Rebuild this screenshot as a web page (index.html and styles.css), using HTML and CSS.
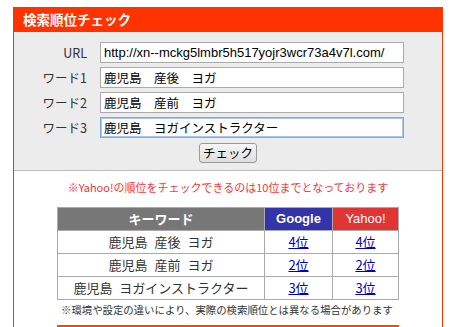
FILE: index.html
```html
<!DOCTYPE html>
<html lang="ja">
<head>
<meta charset="utf-8">
<link rel="stylesheet" href="styles.css">
</head>
<body>
<div class="page">
  <div class="box">
    <div class="box-head">検索順位チェック</div>
    <div class="form">
      <div class="form-grid">
        <label class="lbl">URL</label>
        <div class="inp url">http://xn--mckg5lmbr5h517yojr3wcr73a4v7l.com/</div>
        <label class="lbl">ワード1</label>
        <div class="inp">鹿児島　産後　ヨガ</div>
        <label class="lbl">ワード2</label>
        <div class="inp">鹿児島　産前　ヨガ</div>
        <label class="lbl">ワード3</label>
        <div class="inp focus">鹿児島　ヨガインストラクター</div>
      </div>
      <div class="btn-row"><button class="btn">チェック</button></div>
    </div>
    <div class="result">
      <p class="notice">※Yahoo!の順位をチェックできるのは10位までとなっております</p>
      <table class="rank">
        <tr>
          <th class="th-kw">キーワード</th>
          <th class="th-g">Google</th>
          <th class="th-y">Yahoo!</th>
        </tr>
        <tr>
          <td class="kw">鹿児島 産後 ヨガ</td>
          <td><a href="#">4位</a></td>
          <td><a href="#">4位</a></td>
        </tr>
        <tr>
          <td class="kw">鹿児島 産前 ヨガ</td>
          <td><a href="#">2位</a></td>
          <td><a href="#">2位</a></td>
        </tr>
        <tr>
          <td class="kw">鹿児島 ヨガインストラクター</td>
          <td><a href="#">3位</a></td>
          <td><a href="#">3位</a></td>
        </tr>
      </table>
      <p class="foot">※環境や設定の違いにより、実際の検索順位とは異なる場合があります</p>
      <div class="bar"></div>
    </div>
  </div>
</div>
</body>
</html>
```

FILE: styles.css
```css
html, body {
  margin: 0;
  padding: 0;
  background: #fff;
}
body {
  font-family: "Noto Sans CJK JP", "Liberation Sans", sans-serif;
  color: #333;
}
.page {
  padding: 7px 0 0 13px;
}
.box {
  width: 428px;
  border-left: 1px solid #ff3300;
  border-right: 1px solid #ff3300;
  height: 330px;
}
.box-head {
  height: 25px;
  line-height: 25px;
  background: #ff3300;
  color: #fff;
  font-weight: bold;
  font-size: 13.5px;
  padding-left: 9px;
}
.form {
  background: #ececec;
  padding: 10px 0 7px;
  border-bottom: 1px solid #bbb;
}
.form-grid {
  display: grid;
  grid-template-columns: 73px 304px;
  column-gap: 13px;
  row-gap: 4px;
  align-items: center;
}
.lbl {
  text-align: right;
  font-size: 12.5px;
  color: #333;
  line-height: 21px;
}
.inp {
  box-sizing: border-box;
  height: 21px;
  border: 1px solid #aaa;
  background: #fff;
  font-size: 12.5px;
  line-height: 19px;
  padding-left: 3px;
  color: #000;
  white-space: nowrap;
  overflow: hidden;
}
.inp.url {
  font-family: "Liberation Sans", Arial, sans-serif;
  font-size: 13px;
}
.inp.focus {
  border-color: #7fa8e0;
  box-shadow: 0 0 0 1px #a9c6ee inset;
}
.btn-row {
  display: flex;
  justify-content: center;
  margin-top: 5px;
}
.btn {
  width: 58px;
  height: 20px;
  padding: 0;
  font-family: "Noto Sans CJK JP", sans-serif;
  font-size: 12.5px;
  color: #000;
  background: linear-gradient(#f6f6f6, #dedede);
  border: 1px solid #999;
  border-radius: 3px;
  line-height: 18px;
}
.result {
  background: #fff;
  display: flex;
  flex-direction: column;
  align-items: center;
}
.notice {
  margin: 8px 0 0;
  font-size: 11px;
  line-height: 16px;
  color: #ff3333;
  text-align: center;
}
.rank {
  margin-top: 12px;
  width: 342px;
  border-collapse: collapse;
  font-size: 13px;
}
.rank th, .rank td {
  border: 1px solid #aaa;
  height: 22px;
  padding: 0;
  text-align: center;
  line-height: 16px;
}
.rank th {
  color: #fff;
  font-weight: bold;
  font-size: 13px;
}
.th-kw { background: #777; width: 206px; }
.th-g {
  background: #3333aa;
  font-family: "Liberation Sans", Arial, sans-serif;
  width: 67px;
}
.th-y {
  background: #e03535;
  font-family: "Liberation Sans", Arial, sans-serif;
  font-weight: normal !important;
}
.rank td { color: #333; }
.rank td.kw { word-spacing: 4px; }
.rank a {
  color: #0000cc;
  text-decoration: underline;
}
.foot {
  width: 338px;
  margin: 2px 0 0;
  padding-left: 4px;
  font-size: 10.4px;
  line-height: 16px;
  color: #333;
}
.bar {
  width: 342px;
  height: 3px;
  margin-top: 7px;
  background: #ff4400;
}
```
